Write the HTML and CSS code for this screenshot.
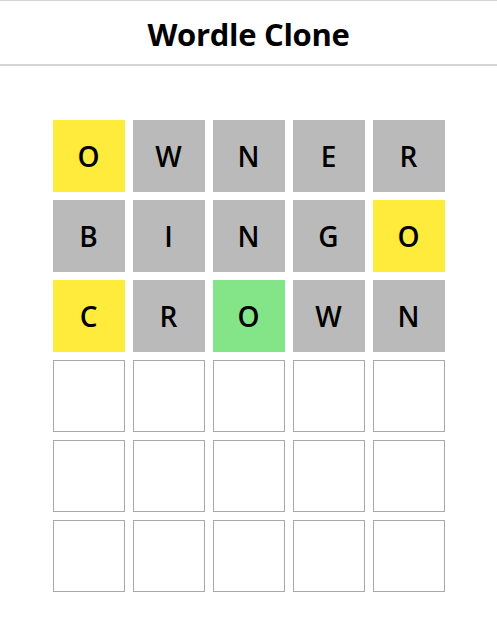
FILE: index.html
```html
<!DOCTYPE html>
<html>
<head>
<meta charset="utf-8">
<link rel="stylesheet" href="styles.css">
</head>
<body>
<header class="header"><h1 class="title">Wordle Clone</h1></header>
<main class="board">
  <div class="tile present">O</div><div class="tile absent">W</div><div class="tile absent">N</div><div class="tile absent">E</div><div class="tile absent">R</div>
  <div class="tile absent">B</div><div class="tile absent">I</div><div class="tile absent">N</div><div class="tile absent">G</div><div class="tile present">O</div>
  <div class="tile present">C</div><div class="tile absent">R</div><div class="tile correct">O</div><div class="tile absent">W</div><div class="tile absent">N</div>
  <div class="tile empty"></div><div class="tile empty"></div><div class="tile empty"></div><div class="tile empty"></div><div class="tile empty"></div>
  <div class="tile empty"></div><div class="tile empty"></div><div class="tile empty"></div><div class="tile empty"></div><div class="tile empty"></div>
  <div class="tile empty"></div><div class="tile empty"></div><div class="tile empty"></div><div class="tile empty"></div><div class="tile empty"></div>
</main>
</body>
</html>
```
FILE: styles.css
```css
body {
  margin: 0;
  font-family: "Open Sans", "Noto Sans", sans-serif;
  background: #fff;
  color: #000;
}
.header {
  border-top: 1px solid #d3d3d3;
  border-bottom: 2px solid #d3d3d3;
  height: 63px;
  display: flex;
  align-items: center;
  justify-content: center;
}
.title {
  margin: 0;
  font-size: 31px;
  font-weight: 700;
  letter-spacing: -0.3px;
  padding-top: 3px;
}
.board {
  margin: 54px auto 0;
  width: 392px;
  display: grid;
  grid-template-columns: repeat(5, 72px);
  grid-auto-rows: 72px;
  gap: 8px;
}
.tile {
  box-sizing: border-box;
  display: flex;
  align-items: center;
  justify-content: center;
  font-size: 28px;
  font-weight: 600;
}
.present { background: #ffeb3b; }
.absent { background: #bababa; }
.correct { background: #84e588; }
.empty { border: 1px solid #a8a8a8; }
```
